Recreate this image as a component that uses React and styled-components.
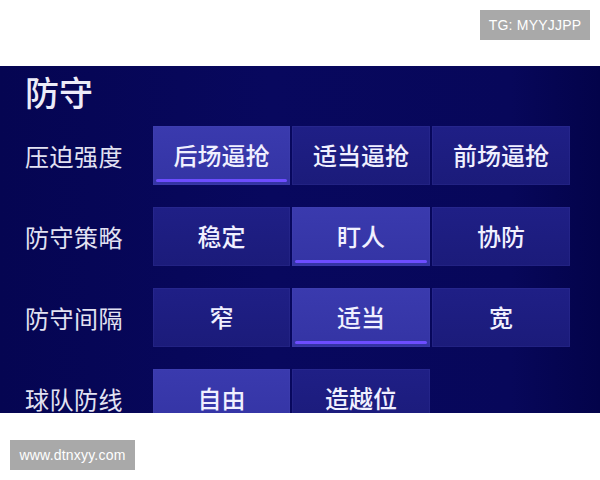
import React from "react";
import styled, { createGlobalStyle } from "styled-components";

const GlobalStyle = createGlobalStyle`
  html, body {
    margin: 0;
    padding: 0;
    background: #ffffff;
  }
  body {
    font-family: "Noto Sans CJK SC", "Noto Sans", sans-serif;
  }
`;

const rows = [
  { label: "压迫强度", options: ["后场逼抢", "适当逼抢", "前场逼抢"], active: 0 },
  { label: "防守策略", options: ["稳定", "盯人", "协防"], active: 1 },
  { label: "防守间隔", options: ["窄", "适当", "宽"], active: 1 },
  { label: "球队防线", options: ["自由", "造越位"], active: 0 },
];

const Page = styled.div`
  width: 600px;
  height: 480px;
  display: flex;
  flex-direction: column;
  overflow: hidden;
`;

const TopBar = styled.div`
  height: 66px;
  display: flex;
  justify-content: flex-end;
  align-items: flex-start;
  padding: 10px 10px 0 0;
  box-sizing: border-box;
`;

const Badge = styled.div`
  height: 30px;
  width: ${(p) => p.$w}px;
  background: #a9a9a9;
  color: #ffffff;
  font-family: "Liberation Sans", Arial, sans-serif;
  font-size: 14px;
  display: flex;
  align-items: center;
  justify-content: center;
  letter-spacing: 0.2px;
`;

const Panel = styled.section`
  height: 347px;
  overflow: hidden;
  padding-left: 25px;
  box-sizing: border-box;
  background: linear-gradient(
    90deg,
    #050552 0%,
    #08085e 45%,
    #07075a 85%,
    #03034a 100%
  );
`;

const Title = styled.h1`
  margin: 0;
  height: 60px;
  display: flex;
  align-items: center;
  padding-bottom: 8px;
  box-sizing: border-box;
  font-size: 34px;
  line-height: 40px;
  font-weight: 500;
  color: #ececf8;
`;

const Rows = styled.div`
  display: flex;
  flex-direction: column;
  gap: 22px;
`;

const Row = styled.div`
  display: grid;
  grid-template-columns: 126px 137px 138px 138px;
  column-gap: 2px;
  height: 59px;
  align-items: stretch;
`;

const Label = styled.div`
  display: flex;
  align-items: center;
  font-size: 24px;
  color: #e2e2f2;
  letter-spacing: 0.5px;
`;

const Option = styled.div`
  position: relative;
  display: flex;
  align-items: center;
  justify-content: center;
  padding-bottom: 2px;
  font-size: 24px;
  font-weight: 500;
  color: #f0f0ff;
  background: ${(p) =>
    p.$active
      ? "linear-gradient(180deg, #3a3aae 0%, #3434a4 100%)"
      : "linear-gradient(180deg, #1f1f86 0%, #1b1b7a 100%)"};
  box-shadow: inset 0 0 0 1px rgba(90, 90, 200, 0.12);

  &::after {
    content: "";
    display: ${(p) => (p.$active ? "block" : "none")};
    position: absolute;
    left: 3px;
    right: 3px;
    bottom: 3px;
    height: 3px;
    border-radius: 2px;
    background: #6d4dff;
  }
`;

const Footer = styled.div`
  flex: 1;
  display: flex;
  align-items: flex-start;
  padding: 27px 0 0 10px;
  box-sizing: border-box;
`;

export default function App() {
  return (
    <Page>
      <GlobalStyle />
      <TopBar>
        <Badge $w={110}>TG: MYYJJPP</Badge>
      </TopBar>
      <Panel>
        <Title>防守</Title>
        <Rows>
          {rows.map((r) => (
            <Row key={r.label}>
              <Label>{r.label}</Label>
              {r.options.map((o, i) => (
                <Option key={o} $active={i === r.active}>
                  {o}
                </Option>
              ))}
            </Row>
          ))}
        </Rows>
      </Panel>
      <Footer>
        <Badge $w={125}>www.dtnxyy.com</Badge>
      </Footer>
    </Page>
  );
}
